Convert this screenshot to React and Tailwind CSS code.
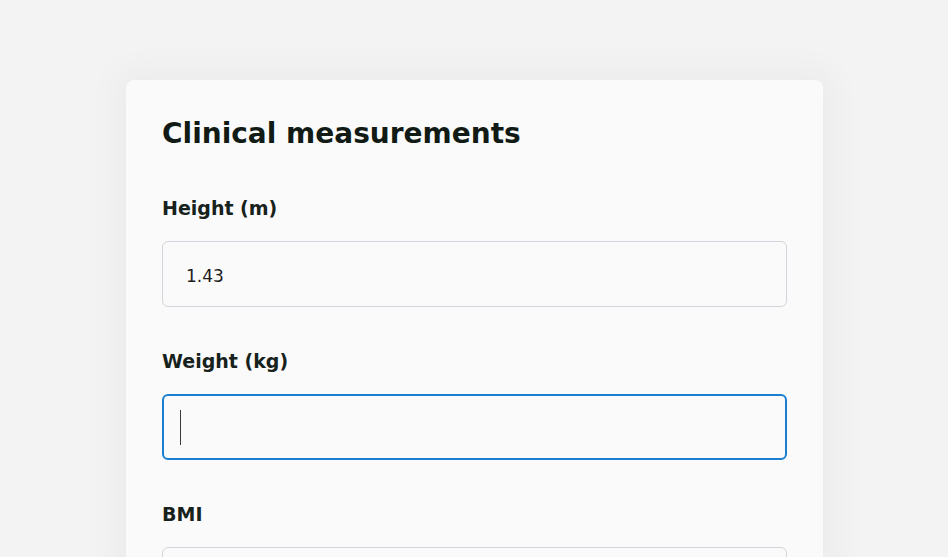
import { useState } from 'react';

const Field = ({ label, value, focused, onChange }) => (
    <div className="flex flex-col">
        <label className="text-[19px] leading-6 font-bold text-[#16221b] mb-[21px]">{label}</label>
        <div
            className={`h-[66px] rounded-[6px] bg-[#fafafa] flex items-center px-[23px] ${
                focused ? 'border-2 border-[#1a7fd1]' : 'border border-[#d3d5dc]'
            }`}
        >
            {focused && !value ? (
                <div className="w-px h-[35px] bg-[#3a3a3a] -ml-[7px]"></div>
            ) : (
                <input
                    value={value}
                    onChange={onChange}
                    className="w-full bg-transparent outline-none text-[17px] text-[#1c1c1c] mt-[5px]"
                />
            )}
        </div>
    </div>
);

export default function App() {
    const [height, setHeight] = useState('1.43');

    return (
        <div
            className="w-[948px] h-[557px] overflow-hidden bg-[#f3f3f4] pt-[80px] pl-[126px]"
            style={{ fontFamily: '"DejaVu Sans", sans-serif' }}
        >
            <div className="w-[697px] bg-[#fafafa] rounded-t-[8px] shadow-[0_0_32px_12px_rgba(0,0,0,0.03)] px-[36px] pt-[36px] pb-10">
                <h1 className="text-[28px] leading-9 font-bold text-[#111a15] mb-[44px]">Clinical measurements</h1>
                <div className="flex flex-col gap-[42px]">
                    <Field label="Height (m)" value={height} onChange={e => setHeight(e.target.value)} />
                    <Field label="Weight (kg)" value="" focused />
                    <Field label="BMI" value="" />
                </div>
            </div>
        </div>
    );
}
